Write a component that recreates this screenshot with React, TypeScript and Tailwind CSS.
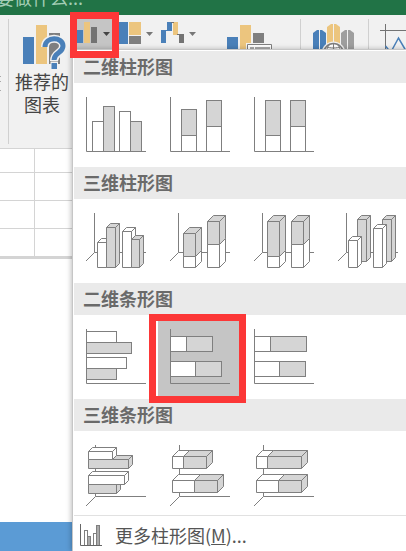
import type { ReactNode } from 'react'
import clsx from 'clsx'

const LINE = '#7f7f7f'
const GRAY = '#d5d5d5'
const BLUE = '#4a80b9'
const TAN = '#ecc57e'

type BarProps = {
  x: number
  y: number
  w: number
  h: number
  fill?: string
}

function Bar({ x, y, w, h, fill = '#fff' }: BarProps) {
  return <rect x={x} y={y} width={w} height={h} fill={fill} stroke={LINE} />
}

// Front face plus the side and top that recede by d
function Box({ x, y, w, h, d = 4, fill = '#fff' }: BarProps & { d?: number }) {
  return (
    <g fill={fill} stroke={LINE} strokeLinejoin="round">
      <path d={`M${x} ${y}l${d} ${-d}h${w}l${-d} ${d}z`} />
      <path d={`M${x + w} ${y}l${d} ${-d}v${h}l${-d} ${d}z`} />
      <rect x={x} y={y} width={w} height={h} />
    </g>
  )
}

function Thumb({ axis, children }: { axis: 'flat' | 'column' | 'bar'; children: ReactNode }) {
  return (
    <svg width="84" height="84" viewBox="0 0 84 84" fill="none" aria-hidden="true">
      {axis === 'flat' && <path d="M12.5 14V68.5H72" stroke={LINE} />}
      {axis === 'column' && <path d="M20.5 14V53.5H72M20.5 53.5L12 62" stroke={LINE} />}
      {axis === 'bar' && <path d="M21.5 14V65.5H72M21.5 65.5L12 75" stroke={LINE} />}
      {children}
    </svg>
  )
}

const sections = [
  {
    title: '二维柱形图',
    items: [
      {
        label: '簇状柱形图',
        icon: (
          <Thumb axis="flat">
            <Bar x={18.5} y={38.5} w={11} h={30} />
            <Bar x={29.5} y={23.5} w={11} h={45} fill={GRAY} />
            <Bar x={45.5} y={28.5} w={11} h={40} />
            <Bar x={56.5} y={38.5} w={11} h={30} fill={GRAY} />
          </Thumb>
        ),
      },
      {
        label: '堆积柱形图',
        icon: (
          <Thumb axis="flat">
            <Bar x={23.5} y={26.5} w={15} h={26} fill={GRAY} />
            <Bar x={23.5} y={52.5} w={15} h={16} />
            <Bar x={48.5} y={17.5} w={15} h={26} fill={GRAY} />
            <Bar x={48.5} y={43.5} w={15} h={25} />
          </Thumb>
        ),
      },
      {
        label: '百分比堆积柱形图',
        icon: (
          <Thumb axis="flat">
            <Bar x={23.5} y={17.5} w={15} h={35} fill={GRAY} />
            <Bar x={23.5} y={52.5} w={15} h={16} />
            <Bar x={48.5} y={17.5} w={15} h={26} fill={GRAY} />
            <Bar x={48.5} y={43.5} w={15} h={25} />
          </Thumb>
        ),
      },
    ],
  },
  {
    title: '三维柱形图',
    items: [
      {
        label: '三维簇状柱形图',
        icon: (
          <Thumb axis="column">
            <Box x={23.5} y={43.5} w={9} h={25} />
            <Box x={32.5} y={28.5} w={9} h={40} fill={GRAY} />
            <Box x={48.5} y={32.5} w={9} h={36} />
            <Box x={57.5} y={40.5} w={8} h={28} fill={GRAY} />
          </Thumb>
        ),
      },
      {
        label: '三维堆积柱形图',
        icon: (
          <Thumb axis="column">
            <Box x={25.5} y={57.5} w={12} h={11} d={6} />
            <Box x={25.5} y={34.5} w={12} h={23} d={6} fill={GRAY} />
            <Box x={49.5} y={45.5} w={12} h={23} d={6} />
            <Box x={49.5} y={22.5} w={12} h={23} d={6} fill={GRAY} />
          </Thumb>
        ),
      },
      {
        label: '三维百分比堆积柱形图',
        icon: (
          <Thumb axis="column">
            <Box x={25.5} y={57.5} w={12} h={11} d={6} />
            <Box x={25.5} y={22.5} w={12} h={35} d={6} fill={GRAY} />
            <Box x={49.5} y={45.5} w={12} h={23} d={6} />
            <Box x={49.5} y={22.5} w={12} h={23} d={6} fill={GRAY} />
          </Thumb>
        ),
      },
      {
        label: '三维柱形图',
        icon: (
          <Thumb axis="column">
            <Box x={31.5} y={20.5} w={9} h={42} fill={GRAY} />
            <Box x={22.5} y={41.5} w={9} h={27} />
            <Box x={56.5} y={20.5} w={9} h={42} fill={GRAY} />
            <Box x={47.5} y={29.5} w={9} h={39} />
          </Thumb>
        ),
      },
    ],
  },
  {
    title: '二维条形图',
    items: [
      {
        label: '簇状条形图',
        icon: (
          <Thumb axis="flat">
            <Bar x={12.5} y={16.5} w={30} h={11} />
            <Bar x={12.5} y={27.5} w={45} h={11} fill={GRAY} />
            <Bar x={12.5} y={42.5} w={40} h={11} />
            <Bar x={12.5} y={53.5} w={30} h={11} fill={GRAY} />
          </Thumb>
        ),
      },
      {
        label: '堆积条形图',
        selected: true,
        icon: (
          <Thumb axis="flat">
            <Bar x={12.5} y={21.5} w={16} h={15} />
            <Bar x={28.5} y={21.5} w={26} h={15} fill={GRAY} />
            <Bar x={12.5} y={46.5} w={25} h={15} />
            <Bar x={37.5} y={46.5} w={26} h={15} fill={GRAY} />
          </Thumb>
        ),
      },
      {
        label: '百分比堆积条形图',
        icon: (
          <Thumb axis="flat">
            <Bar x={12.5} y={21.5} w={16} h={15} />
            <Bar x={28.5} y={21.5} w={36} h={15} fill={GRAY} />
            <Bar x={12.5} y={46.5} w={25} h={15} />
            <Bar x={37.5} y={46.5} w={26} h={15} fill={GRAY} />
          </Thumb>
        ),
      },
    ],
  },
  {
    title: '三维条形图',
    items: [
      {
        label: '三维簇状条形图',
        icon: (
          <Thumb axis="bar">
            <Box x={14.5} y={28.5} w={40} h={9} fill={GRAY} />
            <Box x={14.5} y={20.5} w={24} h={8} />
            <Box x={14.5} y={53.5} w={28} h={9} fill={GRAY} />
            <Box x={14.5} y={44.5} w={36} h={9} />
          </Thumb>
        ),
      },
      {
        label: '三维堆积条形图',
        icon: (
          <Thumb axis="bar">
            <Box x={14.5} y={25.5} w={11} h={12} d={6} />
            <Box x={25.5} y={25.5} w={23} h={12} d={6} fill={GRAY} />
            <Box x={14.5} y={49.5} w={22} h={12} d={6} />
            <Box x={36.5} y={49.5} w={23} h={12} d={6} fill={GRAY} />
          </Thumb>
        ),
      },
      {
        label: '三维百分比堆积条形图',
        icon: (
          <Thumb axis="bar">
            <Box x={14.5} y={25.5} w={11} h={12} d={6} />
            <Box x={25.5} y={25.5} w={34} h={12} d={6} fill={GRAY} />
            <Box x={14.5} y={49.5} w={22} h={12} d={6} />
            <Box x={36.5} y={49.5} w={23} h={12} d={6} fill={GRAY} />
          </Thumb>
        ),
      },
    ],
  },
]

function Separator() {
  return <div className="mt-1 mb-1 w-px shrink-0 bg-[#d0d0d0]" />
}

function SmallButton({ label, active, children }: { label: string; active?: boolean; children: ReactNode }) {
  return (
    <button type="button" aria-label={label} className={clsx('relative mt-1 h-[30px]', active && 'bg-[#c5c5c5]')}>
      <svg width="42" height="30" viewBox="0 0 42 30" aria-hidden="true">
        {children}
        <path d="M28 13h7l-3.5 4z" fill={active ? '#444' : '#777'} />
      </svg>
      {active && (
        <span className="pointer-events-none absolute -top-[7px] -right-[2px] -bottom-[9px] -left-[5px] z-20 border-[7px] border-[#fc3737]" />
      )}
    </button>
  )
}

function Ribbon() {
  return (
    <div className="flex h-[133px] shrink-0 bg-[#f1f1f1]">
      <svg width="8" height="133" viewBox="0 0 8 133" className="shrink-0" aria-hidden="true">
        <path d="M0 61.5h1M0 66.5h1M0 75.5h1" stroke="#aaa" />
      </svg>
      <Separator />
      <button type="button" className="flex w-[66px] shrink-0 flex-col items-center text-lg leading-[23px] text-[#444]">
        <svg width="48" height="55" viewBox="0 0 48 55" aria-hidden="true">
          <path d="M5 22h11v27H5z" fill={BLUE} />
          <path d="M18 10h11v39H18z" fill={TAN} />
          <path d="M31 18h11v31H31z" fill="#7f7f7f" />
          <g fill="none">
            <path d="M27 32C27 21 45 21.5 45 31c0 7.500-9 6-9 15" stroke="#f1f1f1" strokeWidth="8" />
            <path d="M32.5 46.5h7.500v8.500h-7.500z" fill="#f1f1f1" />
            <path d="M27 32C27 21 45 21.5 45 31c0 7.500-9 6-9 14" stroke={BLUE} strokeWidth="5" />
            <path d="M33.5 48H39v6h-5.500z" fill={BLUE} />
          </g>
        </svg>
        <span>
          推荐的
          <br />
          图表
        </span>
      </button>
      <div className="flex shrink-0 items-start gap-px">
        <SmallButton label="插入柱形图或条形图" active>
          <path d="M1 11h7v13H1z" fill={BLUE} />
          <path d="M9 3h6v21H9z" fill={TAN} />
          <path d="M16 8h6v16h-6z" fill="#737373" />
        </SmallButton>
        <SmallButton label="插入层次结构图表">
          <path d="M0 3h10v22H0z" fill={BLUE} />
          <path d="M11 3h12v13H11z" fill={TAN} />
          <path d="M11 17h12v8H11z" fill="#7f7f7f" />
        </SmallButton>
        <SmallButton label="插入瀑布图">
          <path d="M0 11h5v13H0zM6 3h5v9H6zM4 11h3v1H4z" fill={BLUE} />
          <path d="M12 3h5v13h-5z" fill={TAN} />
          <path d="M10 3h3v1h-3zM16 15h3v1h-3zM18 15h5v9h-5z" fill="#737373" />
        </SmallButton>
      </div>
      <button type="button" aria-label="插入组合图" className="ml-6 h-[40px] shrink-0">
        <svg width="46" height="40" viewBox="0 0 46 40" aria-hidden="true">
          <path d="M0 22h11v18H0z" fill={BLUE} />
          <path d="M13 10h11v30H13z" fill={TAN} />
          <path d="M26 18h11v10H26z" fill="#7f7f7f" />
          <path d="M19 28h27v12H19z" fill="#f1f1f1" />
          <path d="M20.5 40V29.5h24V40" fill="#fff" stroke="#7f7f7f" />
          <path d="M23 32h4v3h-4zM28 32h15v3H28z" fill="#aaa" />
        </svg>
      </button>
      <div className="ml-[27px] flex shrink-0">
        <Separator />
        <button type="button" aria-label="三维地图" className="mx-3 h-[40px]">
          <svg width="43" height="40" viewBox="0 0 43 40" aria-hidden="true">
            <path d="M0 18l4-3h5l4 3v22H0z" fill={BLUE} />
            <path d="M14 12l4-3h5l4 3v28H14z" fill={TAN} />
            <path d="M28 18l4-3h5l4 3v22H28z" fill="#9e9e9e" />
            <path d="M6.5 15v25M20.5 9v20M34.5 15v25" stroke="#f1f1f1" />
            <circle cx="20.5" cy="38.5" r="12" fill="#f1f1f1" />
            <g fill="#fff" stroke="#7f7f7f">
              <circle cx="20.5" cy="38.5" r="10" strokeWidth="1.5" />
              <path d="M20.5 28v12M17 29c-3 3-4 7-4 11M24 29c3 3 4 7 4 11M13 31.5c4 2 11 2 15 0" fill="none" />
            </g>
          </svg>
        </button>
        <Separator />
      </div>
      <button type="button" aria-label="折线迷你图" className="ml-[11px] h-[40px] min-w-0 overflow-hidden">
        <svg width="40" height="40" viewBox="0 0 40 40" aria-hidden="true">
          <path d="M5.5 9v31M0 15.5h40" stroke="#737373" />
          <path d="M5.5 31l4 5M12 35l6.5-12 7 12" fill="none" stroke={BLUE} strokeWidth="1.5" />
        </svg>
      </button>
    </div>
  )
}

function Sheet() {
  return (
    <div className="flex grow flex-col bg-white">
      <div className="border-t border-b-3 border-[#d4d4d4]">
        {['h-6', 'h-7', 'h-7', 'h-[27px]'].map((height, i) => (
          <div key={i} className={clsx('flex border-[#d4d4d4]', height, i < 3 && 'border-b')}>
            <div className="w-[35px] border-r border-[#d4d4d4]" />
          </div>
        ))}
      </div>
      <div className="mt-auto h-[29px] bg-[#5b9bd5]" />
    </div>
  )
}

function ChartMenu() {
  return (
    <div className="absolute top-[49px] right-0 left-[72px] z-10 border-t border-l border-[#c6c6c6] bg-white pt-px pl-px shadow-[-1px_0_5px_rgba(0,0,0,0.25)]">
      {sections.map((section) => (
        <section key={section.title}>
          <h2 className="h-8 bg-[#eaeaea] pl-[9px] text-lg leading-[30px] font-bold text-[#6a6a6a]">
            {section.title}
          </h2>
          <div className="flex h-[84px]">
            {section.items.map((item) => (
              <button
                key={item.label}
                type="button"
                aria-label={item.label}
                className={clsx('relative shrink-0', item.selected && 'bg-[#c5c5c5]')}
              >
                {item.icon}
                {item.selected && (
                  <span className="pointer-events-none absolute -top-px -right-1 -bottom-1 -left-[9px] z-20 border-[7px] border-[#fc3737]" />
                )}
              </button>
            ))}
          </div>
        </section>
      ))}
      <button
        type="button"
        className="flex h-9 w-full items-center gap-3 border-t border-[#e1e1e1] pt-[3px] pl-[6px] text-lg leading-6 text-[#555]"
      >
        <svg width="23" height="23" viewBox="0 0 23 23" fill="none" aria-hidden="true">
          <Bar x={4.5} y={6.5} w={3} h={15} />
          <Bar x={7.5} y={12.5} w={3} h={9} fill="#aaa" />
          <Bar x={13.5} y={9.5} w={3} h={12} />
          <Bar x={16.5} y={1.5} w={3} h={20} fill="#aaa" />
          <path d="M.5 0V21.5H22" stroke="#666" />
        </svg>
        <span>
          更多柱形图(<u>M</u>)...
        </span>
      </button>
    </div>
  )
}

export default function App() {
  return (
    <div className="relative flex min-h-screen flex-col overflow-hidden bg-white font-['Noto_Sans_CJK_SC',sans-serif]">
      <header className="h-[15px] shrink-0 overflow-hidden bg-[#217346]">
        <p className="-mt-[15px] -ml-1 text-lg leading-6 text-[#a3cdb5]">要做什么...</p>
      </header>
      <Ribbon />
      <Sheet />
      <ChartMenu />
    </div>
  )
}
